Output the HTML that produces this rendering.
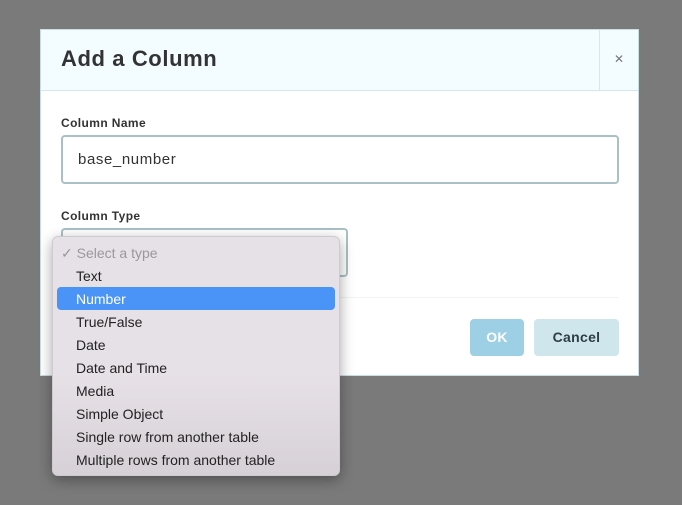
<!DOCTYPE html>
<html><head><style>
body{margin:0;width:682px;height:505px;background:#7a7a7a;position:relative;overflow:hidden;font-family:"Liberation Sans",sans-serif}
.dlg{position:absolute;left:40px;top:29px;width:599px;height:347px;background:#fff;border:1px solid #c9dde2;box-sizing:border-box}
.hdr{position:absolute;left:0;top:0;width:100%;height:61px;background:#f3fdff;border-bottom:1px solid #d2e8ef;box-sizing:border-box}
.title{position:absolute;left:20px;top:16px;font-size:22px;font-weight:bold;color:#333;letter-spacing:0.6px}
.sep{position:absolute;left:558px;top:0;width:1px;height:60px;background:#d2e8ef}
.x{position:absolute;left:573px;top:22px;font-size:12px;color:#777}
.lbl{position:absolute;font-size:12px;font-weight:bold;color:#333;letter-spacing:0.4px}
.inp{position:absolute;border:2px solid #a8c0c6;border-radius:4px;box-sizing:border-box;background:#fff}
.btn{position:absolute;top:289px;height:37px;border-radius:4px;font-size:14px;font-weight:bold;text-align:center;line-height:37px;letter-spacing:0.3px}
.dd{position:absolute;left:52px;top:236px;width:288px;height:240px;background:linear-gradient(#e6e1e6 0,#e6e1e6 58%,#d6d1d6 100%);border-radius:6px;box-shadow:0 4px 14px rgba(0,0,0,.35);border:1px solid #cfcacf;box-sizing:border-box}
.it{position:absolute;left:23px;font-size:14px;color:#222;line-height:23px}
.hl{position:absolute;left:4px;top:50px;width:278px;height:23px;background:#4a94f8;border-radius:4px}
</style></head><body>
<div class="dlg">
 <div class="hdr"><div class="title">Add a Column</div><div class="sep"></div><div class="x">✕</div></div>
 <div class="lbl" style="left:20px;top:86px">Column Name</div>
 <div class="inp" style="left:20px;top:105px;width:558px;height:49px"><span style="position:absolute;left:15px;top:14px;font-size:15px;color:#333;letter-spacing:0.6px">base_number</span></div>
 <div class="lbl" style="left:20px;top:179px">Column Type</div>
 <div class="inp" style="left:20px;top:198px;width:287px;height:49px"></div>
 <div style="position:absolute;left:20px;top:267px;width:558px;height:1px;background:#f0f4f5"></div>
 <div class="btn" style="left:429px;width:54px;background:#9dd0e4;color:#fff">OK</div>
 <div class="btn" style="left:493px;width:85px;background:#cfe6ed;color:#2f3d45">Cancel</div>
</div>
<div class="dd">
 <div class="hl"></div>
 <div class="it" style="left:8px;top:5px;color:#999">✓ Select a type</div>
 <div class="it" style="top:28px">Text</div>
 <div class="it" style="top:51px;color:#fff">Number</div>
 <div class="it" style="top:74px">True/False</div>
 <div class="it" style="top:97px">Date</div>
 <div class="it" style="top:120px">Date and Time</div>
 <div class="it" style="top:143px">Media</div>
 <div class="it" style="top:166px">Simple Object</div>
 <div class="it" style="top:189px">Single row from another table</div>
 <div class="it" style="top:212px">Multiple rows from another table</div>
</div>
</body></html>
